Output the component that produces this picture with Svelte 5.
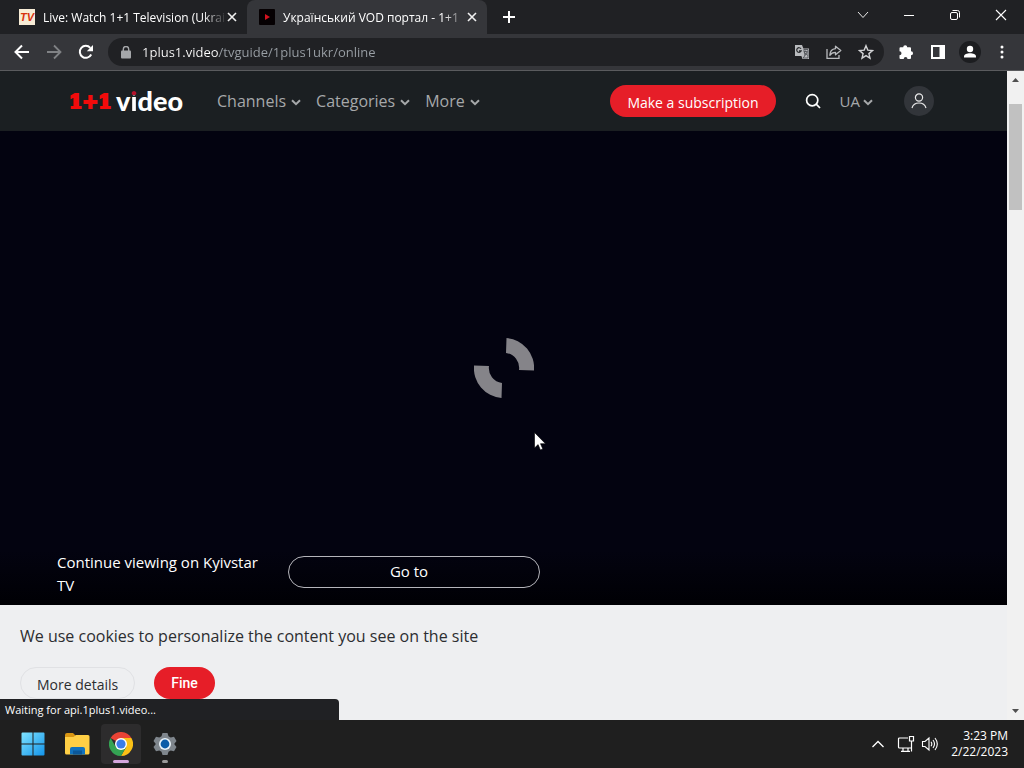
<script lang="ts">
    let tabs = $state([
        { id: 1, title: "Live: Watch 1+1 Television (Ukrai", icon: "tv" },
        { id: 2, title: "Український VOD портал - 1+1", icon: "play" },
    ]);
    let active = $state(2);
    let url = $state("1plus1.video/tvguide/1plus1ukr/online");
    let cookiesOpen = $state(true);

    const menu = ["Channels", "Categories", "More"];

    function closeTab(id: number) {
        tabs = tabs.filter((t) => t.id !== id);
    }
</script>

{#snippet chevron()}
    <svg class="chevron" width="10" height="7" viewBox="0 0 10 7">
        <path d="M1 1.2 5 5.2 9 1.2" fill="none" stroke="currentColor" stroke-width="2" />
    </svg>
{/snippet}

<div class="window">
    <div class="tab-strip">
        {#each tabs as tab (tab.id)}
            <div class="tab" class:active={tab.id === active}>
                <button class="tab-main" onclick={() => (active = tab.id)}>
                    {#if tab.icon === "tv"}
                        <span class="favicon tv">TV</span>
                    {:else}
                        <svg class="favicon" width="16" height="16" viewBox="0 0 16 16">
                            <rect width="16" height="16" rx="1" fill="#050002" />
                            <path d="M6 5v6l5-3z" fill="#d3121f" />
                        </svg>
                    {/if}
                    <span class="tab-title">{tab.title}</span>
                </button>
                <button class="tab-close" aria-label="Close tab" onclick={() => closeTab(tab.id)}>
                    <svg width="10" height="10" viewBox="0 0 10 10">
                        <path d="M1 1l8 8M9 1l-8 8" stroke="#f1f1f1" stroke-width="1.6" />
                    </svg>
                </button>
            </div>
        {/each}
        <button class="new-tab" aria-label="New tab">
            <svg width="14" height="14" viewBox="0 0 14 14">
                <path d="M7 1v12M1 7h12" stroke="#fff" stroke-width="2" />
            </svg>
        </button>
        <div class="window-buttons">
            <button aria-label="Search tabs">
                <svg width="12" height="12" viewBox="0 0 12 12">
                    <path d="M1 3l5 5.5L11 3" fill="none" stroke="#e8e8e8" />
                </svg>
            </button>
            <button aria-label="Minimize">
                <svg width="12" height="12" viewBox="0 0 12 12">
                    <path d="M1 6.5h10" stroke="#fff" />
                </svg>
            </button>
            <button aria-label="Restore">
                <svg width="12" height="12" viewBox="0 0 12 12" fill="none" stroke="#fff">
                    <rect x="1.5" y="3.5" width="7" height="7" rx="1.5" />
                    <path d="M3.5 1.5h5q2 0 2 2v5" />
                </svg>
            </button>
            <button aria-label="Close">
                <svg width="12" height="12" viewBox="0 0 12 12">
                    <path d="M1 1l10 10M11 1 1 11" stroke="#fff" stroke-width="1.1" />
                </svg>
            </button>
        </div>
    </div>

    <div class="toolbar">
        <button class="tool" aria-label="Back">
            <svg width="16" height="16" viewBox="0 0 16 16" fill="none" stroke="#fff" stroke-width="2">
                <path d="M15 8H2M8 1.5 1.5 8 8 14.5" />
            </svg>
        </button>
        <button class="tool" aria-label="Forward">
            <svg width="16" height="16" viewBox="0 0 16 16" fill="none" stroke="#808285" stroke-width="1.8">
                <path d="M1 8h13M8 1.5 14.5 8 8 14.5" />
            </svg>
        </button>
        <button class="tool" aria-label="Reload">
            <svg width="16" height="16" viewBox="0 0 16 16">
                <path d="M13.2 10.5A6 6 0 1 1 12.3 3.8" fill="none" stroke="#fff" stroke-width="2" />
                <path d="M15 1v6.2H8.8z" fill="#fff" />
            </svg>
        </button>
        <div class="omnibox">
            <svg class="lock" width="10" height="13" viewBox="0 0 10 13">
                <rect y="4.5" width="10" height="8" rx="1" fill="#a5a7aa" />
                <path d="M2.3 5V3.2a2.7 2.7 0 0 1 5.4 0V5" fill="none" stroke="#a5a7aa" stroke-width="1.4" />
            </svg>
            <input class="url" type="text" aria-label="Address" bind:value={url} />
            <button class="tool" aria-label="Translate">
                <svg width="16" height="16" viewBox="0 0 16 16">
                    <path d="M1 1h7l1.4 3.5H15V15H8.5L7.4 12H1z" fill="#b9bbbe" />
                    <path d="M7 4.8A2.3 2.3 0 1 0 7.2 6.8H5" fill="none" stroke="#26282b" stroke-width="1.2" />
                    <path d="M9.8 5.5H14V14H9l2-2.4zM9.8 7.6h3.7M11.6 6.5v1.1M13 7.8c-.4 1.8-1.4 3-2.6 3.8M10.6 8.5l3 3" fill="none" stroke="#45484c" stroke-width=".8" />
                </svg>
            </button>
            <button class="tool" aria-label="Share">
                <svg width="16" height="16" viewBox="0 0 16 16" fill="none" stroke="#b9bbbe" stroke-width="1.3">
                    <path d="M1 5v9.3h12V11" />
                    <path d="M9.5 2.2 14.8 6.5 9.5 10.8V8.3C6.8 8.3 5 9.3 3.8 11.3 4 7.6 6 5 9.5 4.7z" stroke-linejoin="round" />
                </svg>
            </button>
            <button class="tool" aria-label="Bookmark">
                <svg width="16" height="16" viewBox="0 0 16 16">
                    <path d="M8 1.7l1.8 4.4 4.7.4-3.6 3.1 1.1 4.6L8 11.7l-4 2.5 1.1-4.6L1.5 6.5l4.7-.4z" fill="none" stroke="#d3d4d6" stroke-width="1.4" />
                </svg>
            </button>
        </div>
        <div class="tools">
            <button class="tool" aria-label="Extensions">
                <svg width="16" height="16" viewBox="0 0 16 16">
                    <path d="M5.2 3.2a2 2 0 0 1 4 0H12a1 1 0 0 1 1 1v3a2 2 0 0 1 0 4.1V14a1 1 0 0 1-1 1H9.5a1.9 1.9 0 0 0-3.8 0H2.5a1 1 0 0 1-1-1v-2.7a2 2 0 0 0 0-4V4.2a1 1 0 0 1 1-1z" fill="#fff" />
                </svg>
            </button>
            <button class="tool" aria-label="Side panel">
                <svg width="14" height="14" viewBox="0 0 14 14">
                    <path fill-rule="evenodd" d="M0 0h14v14H0zM2 2v10h6.5V2z" fill="#fff" />
                </svg>
            </button>
            <button class="tool" aria-label="Profile">
                <svg width="22" height="22" viewBox="0 0 22 22">
                    <circle cx="11" cy="11" r="11" fill="#1c1d20" />
                    <circle cx="11" cy="8" r="3.2" fill="#fff" />
                    <path d="M5 16.5v-1c0-2 3-3.2 6-3.2s6 1.2 6 3.2v1z" fill="#fff" />
                </svg>
            </button>
            <button class="tool" aria-label="Menu">
                <svg width="4" height="14" viewBox="0 0 4 14" fill="#fff">
                    <circle cx="2" cy="2" r="1.5" />
                    <circle cx="2" cy="7" r="1.5" />
                    <circle cx="2" cy="12" r="1.5" />
                </svg>
            </button>
        </div>
    </div>

    <div class="viewport">
        <div class="page">
            <header class="site-header">
                <a class="logo" href="/" aria-label="1+1 video">
                    <span class="logo-mark">1+1</span>
                    <span class="logo-word">v<span class="logo-i">i</span>deo</span>
                </a>
                <nav class="menu">
                    {#each menu as item}
                        <a href="/">{item}{@render chevron()}</a>
                    {/each}
                </nav>
                <button class="btn btn-red subscribe">Make a subscription</button>
                <button class="search" aria-label="Search">
                    <svg width="16" height="16" viewBox="0 0 16 16" fill="none" stroke="#fff" stroke-width="1.7">
                        <circle cx="7.2" cy="7.2" r="5.6" />
                        <path d="M11.2 11.2 15 15" />
                    </svg>
                </button>
                <button class="lang">UA{@render chevron()}</button>
                <a class="account" href="/" aria-label="Account">
                    <svg width="16" height="16" viewBox="0 0 16 16" fill="none" stroke="#e9e9ea" stroke-width="1.2">
                        <circle cx="8" cy="4.5" r="3.6" />
                        <path d="M1 15c1-3.6 3.6-5 7-5s6 1.4 7 5" />
                    </svg>
                </a>
            </header>

            <main class="player">
                <svg class="loader" width="60" height="60" viewBox="0 0 60 60" fill="#858489">
                    <path d="M32.5 0A30 30 0 0 1 60 32.5L45 32A15 15 0 0 0 32 15z" />
                    <path d="M27.5 60A30 30 0 0 1 0 27.5L15 28A15 15 0 0 0 28 45z" />
                </svg>
                <div class="promo">
                    <p>Continue viewing on Kyivstar TV</p>
                    <button class="btn go">Go to</button>
                </div>
            </main>

            {#if cookiesOpen}
                <section class="cookies">
                    <p>We use cookies to personalize the content you see on the site</p>
                    <div class="cookie-actions">
                        <button class="btn details">More details</button>
                        <button class="btn btn-red fine" onclick={() => (cookiesOpen = false)}>Fine</button>
                    </div>
                </section>
            {/if}
        </div>

        <div class="scrollbar">
            <svg width="7" height="4" viewBox="0 0 7 4"><path d="M0 4h7L3.5 0z" fill="#505050" /></svg>
            <div class="track"><div class="thumb"></div></div>
            <svg width="7" height="4" viewBox="0 0 7 4"><path d="M0 0h7L3.5 4z" fill="#505050" /></svg>
        </div>

        <div class="status">Waiting for api.1plus1.video...</div>

        <svg class="cursor" width="12" height="19" viewBox="0 0 12 19">
            <path d="M.5 .5v15.5l3.6-3.4 2.3 5.3 2.4-1-2.3-5.2h5z" fill="#fff" stroke="#000" stroke-width=".6" />
        </svg>
    </div>

    <footer class="taskbar">
        <button class="app" aria-label="Start">
            <svg width="24" height="24" viewBox="0 0 24 24">
                <defs>
                    <linearGradient id="win" x2="1" y2="1">
                        <stop offset="0" stop-color="#7fe3ff" />
                        <stop offset="1" stop-color="#1394ea" />
                    </linearGradient>
                </defs>
                <path d="M1.5 .5h10v11H.5v-10a1 1 0 0 1 1-1zM12.5 .5h10a1 1 0 0 1 1 1v10h-11zM.5 12.5h11v11h-10a1 1 0 0 1-1-1zM12.5 12.5h11v10a1 1 0 0 1-1 1h-10z" fill="url(#win)" />
            </svg>
        </button>
        <button class="app" aria-label="File Explorer">
            <svg width="26" height="24" viewBox="0 0 26 24">
                <path d="M1 3q0-2 2-2h6l3 3v2H1z" fill="#d99613" />
                <path d="M1 5h8.5L12 3h12q1.5 0 1.5 1.5V21q0 1.5-1.5 1.5H2.5Q1 22.5 1 21z" fill="#ffcf45" />
                <path d="M6 22.5V17q0-2 2-2h11q2 0 2 2v5.5z" fill="#1172bd" />
                <path d="M9 18.5h9v4H9z" fill="#0b5798" />
            </svg>
        </button>
        <button class="app current" aria-label="Google Chrome">
            <svg width="24" height="24" viewBox="0 0 24 24">
                <path d="M12 12 1.6 6A12 12 0 0 1 22.4 6z" fill="#e94335" />
                <path d="M12 6h10.4A12 12 0 0 1 12 24l5.2-9z" fill="#fbc116" />
                <path d="M1.6 6A12 12 0 0 0 12 24l5.2-9L12 12l-5.2 3z" fill="#34a353" />
                <circle cx="12" cy="12" r="6" fill="#fff" />
                <circle cx="12" cy="12" r="4.6" fill="#3a7de8" />
            </svg>
        </button>
        <button class="app running" aria-label="Settings">
            <svg width="24" height="24" viewBox="0 0 24 24">
                <path d="M9.5 1h5l1 3.2 2.2 1.3 3.3-.8 2.5 4.3-2.3 3 2.3 3-2.5 4.3-3.3-.8-2.2 1.3-1 3.2h-5l-1-3.2-2.2-1.3-3.3.8L.5 15l2.3-3L.5 9 3 4.7l3.3.8 2.2-1.3z" fill="#7f868d" />
                <circle cx="12" cy="12" r="6" fill="#eaf3fa" />
                <circle cx="12" cy="12" r="4.4" fill="#0c5ca8" />
            </svg>
        </button>
        <div class="tray">
            <svg width="14" height="10" viewBox="0 0 14 10">
                <path d="M1.5 8 7 2.5 12.5 8" fill="none" stroke="#fff" stroke-width="1.3" />
            </svg>
            <svg class="network" width="18" height="18" viewBox="0 0 18 18" fill="none" stroke="#fff" stroke-width="1.2">
                <path d="M11 3H2.5Q1.5 3 1.5 4v8q0 1 1 1H15M6 13v3M11 13v3M4 16.4h9" />
                <path d="M12.5 1.5h4v4.5h-4zM14.5 6v10.5" />
            </svg>
            <svg width="18" height="16" viewBox="0 0 18 16" fill="none" stroke="#fff" stroke-width="1.1">
                <path d="M1.5 5.5H4L8 2v12l-4-3.5H1.5zM10 5.8q1.6 2.2 0 4.4M12 4q3 4 0 8M14 2q4.6 6 0 12" />
            </svg>
            <div class="clock">
                <span>3:23 PM</span>
                <span>2/22/2023</span>
            </div>
        </div>
    </footer>
</div>

<style>
    :global(body) {
        margin: 0;
    }

    .window {
        display: flex;
        flex-direction: column;
        height: 100vh;
        overflow: hidden;
        font-family: "Open Sans", "Noto Sans", sans-serif;
        font-size: 12px;
        color: #fff;
        background: #202124;
    }

    button {
        display: flex;
        align-items: center;
        justify-content: center;
        padding: 0;
        border: 0;
        background: none;
        color: inherit;
        font: inherit;
        cursor: pointer;
    }

    a {
        color: inherit;
        text-decoration: none;
    }

    p {
        margin: 0;
    }

    svg {
        flex: none;
    }

    /* browser chrome */
    .tab-strip {
        display: flex;
        flex: none;
        height: 34px;
        padding-left: 7px;
    }

    .tab {
        display: flex;
        align-items: center;
        box-sizing: border-box;
        flex: 0 1 240px;
        min-width: 0;
        padding: 0 10px 0 12px;
        border-radius: 8px 8px 0 0;
    }

    .tab.active {
        background: #35363a;
    }

    .tab-main {
        flex: 1;
        min-width: 0;
        gap: 8px;
        height: 34px;
    }

    .favicon {
        flex: none;
        width: 16px;
        height: 16px;
    }

    .tv {
        background: #f7ecd6;
        color: #d8330f;
        font: italic bold 11px/16px "Liberation Sans", sans-serif;
        text-align: center;
    }

    .tab-title {
        flex: 1;
        overflow: hidden;
        text-align: left;
        white-space: nowrap;
        mask-image: linear-gradient(to right, #000 87%, transparent);
    }

    .tab-close {
        flex: none;
        width: 10px;
        height: 16px;
    }

    .new-tab {
        width: 28px;
        margin-left: 8px;
    }

    .window-buttons {
        display: flex;
        height: 29px;
        margin-left: auto;
    }

    .window-buttons button {
        width: 46px;
    }

    .toolbar {
        display: flex;
        align-items: center;
        flex: none;
        height: 36px;
        padding: 0 6px;
        background: #35363a;
        border-bottom: 1px solid #5a5b5e;
    }

    .tool {
        flex: none;
        width: 32px;
        height: 28px;
    }

    .omnibox {
        display: flex;
        align-items: center;
        flex: 1;
        min-width: 0;
        height: 28px;
        margin: 0 6px;
        padding: 0 2px 0 13px;
        border-radius: 14px;
        background: #202124;
    }

    .lock {
        margin-right: 11px;
    }

    /* the host part is white, the path after it grey */
    .url {
        flex: 1;
        min-width: 0;
        height: 28px;
        padding: 0;
        border: 0;
        outline: 0;
        background: linear-gradient(to right, #fff 77px, #9aa0a6 77px);
        background-clip: text;
        color: transparent;
        font: inherit;
        font-size: 13px;
    }

    .tools {
        display: flex;
    }

    /* site */
    .viewport {
        position: relative;
        display: flex;
        flex: 1;
        min-height: 0;
    }

    .page {
        display: flex;
        flex-direction: column;
        flex: 1;
        min-width: 0;
        background: #030310;
    }

    .site-header {
        display: flex;
        align-items: center;
        flex: none;
        height: 60px;
        padding: 0 73px 0 69px;
        background: #1b1f22;
        color: #a6a8aa;
        font-size: 16px;
    }

    .logo {
        display: flex;
        align-items: center;
        justify-content: space-between;
        width: 114px;
    }

    .logo-mark {
        color: #f30b0b;
        font: bold 19px/26px "DejaVu Serif", serif;
        -webkit-text-stroke: 2px #f30b0b;
    }

    .logo-word {
        color: #fff;
        font: 900 27px/28px Lato, sans-serif;
    }

    .logo-i {
        background: linear-gradient(#b5122c 11px, #fff 11px);
        background-clip: text;
        color: transparent;
    }

    .menu {
        display: flex;
        gap: 15px;
        margin-left: 34px;
    }

    .menu a {
        display: flex;
        align-items: center;
    }

    .chevron {
        margin: 2px 0 0 5px;
    }

    .btn {
        height: 32px;
        border-radius: 16px;
        font-size: 14px;
    }

    .btn-red {
        background: #e61e28;
        color: #fff;
    }

    .subscribe {
        margin-left: auto;
        padding: 2px 17px 0;
        font-weight: 500;
    }

    .search {
        margin-left: 29px;
    }

    .lang {
        margin-left: 19px;
        font-size: 15px;
    }

    .lang .chevron {
        margin-left: 3px;
    }

    .account {
        display: flex;
        align-items: center;
        justify-content: center;
        width: 30px;
        height: 30px;
        margin-left: 31px;
        border-radius: 50%;
        background: #32353a;
    }

    .player {
        position: relative;
        display: flex;
        flex-direction: column;
        flex: 1;
        justify-content: flex-end;
        min-height: 0;
    }

    .loader {
        position: absolute;
        inset: 0;
        margin: auto;
    }

    .promo {
        display: flex;
        align-items: flex-start;
        gap: 24px;
        padding: 0 57px 8px;
        background: linear-gradient(#030310, #000004);
    }

    .promo p {
        width: 207px;
        font-size: 15px;
        font-weight: 500;
        line-height: 23px;
    }

    .go {
        box-sizing: border-box;
        width: 252px;
        margin-top: 5px;
        padding: 0 10px 2px 0;
        border: 1px solid #b5b5bb;
        font-size: 15px;
        font-weight: 500;
    }

    .cookies {
        box-sizing: border-box;
        flex: none;
        height: 115px;
        padding: 20px;
        overflow: hidden;
        background: #eeeff1;
        color: #2c2d30;
    }

    .cookies p {
        font-size: 16px;
        line-height: 22px;
    }

    .cookie-actions {
        display: flex;
        gap: 19px;
        margin-top: 20px;
    }

    .details {
        box-sizing: border-box;
        padding: 2px 16px 0;
        border: 1px solid #e0e1e4;
    }

    .fine {
        padding: 0 17px;
        font-family: Roboto, sans-serif;
        font-weight: 500;
    }

    .scrollbar {
        display: flex;
        flex-direction: column;
        align-items: center;
        box-sizing: border-box;
        width: 17px;
        padding: 7px 0;
        background: #f1f1f1;
    }

    .track {
        flex: 1;
        padding-top: 22px;
    }

    .thumb {
        width: 13px;
        height: 106px;
        background: #c1c1c1;
    }

    .status {
        position: absolute;
        bottom: 0;
        left: 0;
        box-sizing: border-box;
        width: 339px;
        padding-left: 5px;
        border-radius: 0 4px 0 0;
        background: #202124;
        font-size: 11px;
        line-height: 21px;
    }

    .cursor {
        position: absolute;
        top: 361px;
        left: 534px;
    }

    /* taskbar */
    .taskbar {
        display: flex;
        align-items: center;
        flex: none;
        gap: 4px;
        height: 48px;
        padding: 0 16px 0 13px;
        background: #1f1f1f;
    }

    .app {
        position: relative;
        width: 40px;
        height: 40px;
        border-radius: 4px;
    }

    .app.current {
        background: #2d2c2d;
    }

    .app.current::after,
    .app.running::after {
        content: "";
        position: absolute;
        bottom: 1px;
        width: 6px;
        height: 3px;
        border-radius: 2px;
        background: #9a9a9a;
    }

    .app.current::after {
        width: 16px;
        background: #d5a6dd;
    }

    .tray {
        display: flex;
        align-items: center;
        gap: 6px;
        margin-left: auto;
    }

    .network {
        margin-left: 6px;
    }

    .clock {
        display: flex;
        flex-direction: column;
        margin-left: 6px;
        text-align: right;
        line-height: 16px;
    }
</style>
